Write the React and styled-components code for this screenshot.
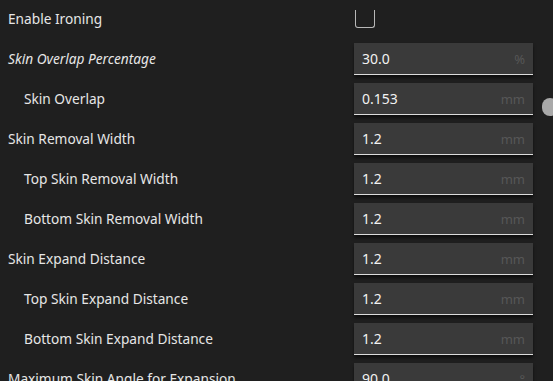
import React from "react";
import styled, { createGlobalStyle } from "styled-components";

const Global = createGlobalStyle`
  html, body { margin: 0; padding: 0; background: #1f1f1f; overflow: hidden; }
  body { font-family: "Noto Sans", "Open Sans", sans-serif; }
`;

const Page = styled.div`
  position: relative;
  width: 553px;
  height: 381px;
  overflow: hidden;
  background: #1f1f1f;
`;

const List = styled.div`
  display: flex;
  flex-direction: column;
  margin-top: -2px;
  width: 541px;
`;

const Row = styled.div`
  display: flex;
  align-items: center;
  height: 40px;
  flex-shrink: 0;
`;

const Label = styled.div`
  flex: 1;
  padding-left: ${(p) => (p.$indent ? 24 : 8)}px;
  font-size: 13.7px;
  color: #e6e6e6;
  font-style: ${(p) => (p.$italic ? "italic" : "normal")};
  white-space: nowrap;
`;

const Control = styled.div`
  width: 179px;
  margin-right: 8px;
  height: 40px;
  display: flex;
  align-items: flex-start;
`;

const Field = styled.div`
  margin-top: 5px;
  width: 179px;
  height: 32px;
  box-sizing: border-box;
  background: #3a3a3a;
  border-bottom: 1px solid #dcdcdc;
  box-shadow: 0 3px 3px rgba(0, 0, 0, 0.55);
  display: flex;
  align-items: center;
  justify-content: space-between;
  padding: 0 8px;
`;

const Value = styled.span`
  font-size: 14px;
  color: #f2f2f2;
`;

const Unit = styled.span`
  font-size: 13px;
  color: #575757;
`;

const Check = styled.div`
  margin-top: 12px;
  margin-left: 1px;
  width: 20px;
  height: 18px;
  box-sizing: border-box;
  border: 1.5px solid #b8b8b8;
  border-top: none;
  border-radius: 0 0 3px 3px;
`;

const Thumb = styled.div`
  position: absolute;
  left: 542px;
  top: 98px;
  width: 16px;
  height: 18px;
  border-radius: 8px;
  background: #a9a9a9;
`;

const rows = [
  { label: "Skin Overlap Percentage", italic: true, value: "30.0", unit: "%" },
  { label: "Skin Overlap", indent: true, value: "0.153", unit: "mm" },
  { label: "Skin Removal Width", value: "1.2", unit: "mm" },
  { label: "Top Skin Removal Width", indent: true, value: "1.2", unit: "mm" },
  { label: "Bottom Skin Removal Width", indent: true, value: "1.2", unit: "mm" },
  { label: "Skin Expand Distance", value: "1.2", unit: "mm" },
  { label: "Top Skin Expand Distance", indent: true, value: "1.2", unit: "mm" },
  { label: "Bottom Skin Expand Distance", indent: true, value: "1.2", unit: "mm" },
  { label: "Maximum Skin Angle for Expansion", value: "90.0", unit: "°" },
];

export default function App() {
  return (
    <Page>
      <Global />
      <List>
        <Row>
          <Label>Enable Ironing</Label>
          <Control>
            <Check />
          </Control>
        </Row>
        {rows.map((r) => (
          <Row key={r.label}>
            <Label $indent={r.indent} $italic={r.italic}>
              {r.label}
            </Label>
            <Control>
              <Field>
                <Value>{r.value}</Value>
                <Unit>{r.unit}</Unit>
              </Field>
            </Control>
          </Row>
        ))}
      </List>
      <Thumb />
    </Page>
  );
}
